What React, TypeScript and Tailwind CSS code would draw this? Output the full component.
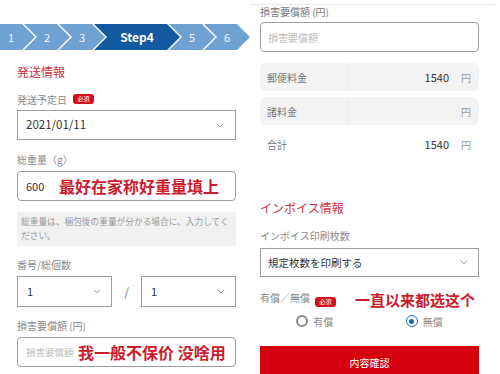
import React from "react";

const Chevron = () => (
  <svg width="8" height="5" viewBox="0 0 8 5" className="shrink-0">
    <polyline points="0.8,0.8 4,3.8 7.2,0.8" fill="none" stroke="#9a9a9a" strokeWidth="1" />
  </svg>
);

const Badge = () => (
  <span className="inline-flex items-center justify-center w-[21px] h-[10px] rounded-[3px] bg-[#d3101c] text-white text-[6px] leading-none">
    必須
  </span>
);

const Label = ({ children }: { children: React.ReactNode }) => (
  <div className="h-[16px] leading-[16px] text-[10px] text-[#8a8a8a]">{children}</div>
);

const Anno = ({ children, className = "" }: { children: React.ReactNode; className?: string }) => (
  <span
    className={`font-bold text-[#cc1b2e] whitespace-nowrap ${className}`}
    style={{ fontFamily: '"Noto Sans CJK SC", sans-serif' }}
  >
    {children}
  </span>
);

function StepBar() {
  return (
    <div className="flex h-[26px]">
      <div className="w-[35px] h-full bg-[#6ea2d3] [clip-path:polygon(0_0,calc(100%_-_13px)_0,100%_50%,calc(100%_-_13px)_100%,0_100%)] flex items-center pr-[13px]">
        <span className="flex-1 text-center text-white/90 text-[11px]">1</span>
      </div>
      <div className="w-[46px] ml-[-11px] h-full bg-[#6ea2d3] [clip-path:polygon(0_0,calc(100%_-_13px)_0,100%_50%,calc(100%_-_13px)_100%,0_100%,13px_50%)] flex items-center px-[13px]">
        <span className="flex-1 text-center text-white/90 text-[11px]">2</span>
      </div>
      <div className="w-[46px] ml-[-11px] h-full bg-[#6ea2d3] [clip-path:polygon(0_0,calc(100%_-_13px)_0,100%_50%,calc(100%_-_13px)_100%,0_100%,13px_50%)] flex items-center px-[13px]">
        <span className="flex-1 text-center text-white/90 text-[11px]">3</span>
      </div>
      <div className="w-[86px] ml-[-11px] h-full bg-[#12599f] [clip-path:polygon(0_0,calc(100%_-_13px)_0,100%_50%,calc(100%_-_13px)_100%,0_100%,13px_50%)] flex items-center px-[13px]">
        <span className="flex-1 text-center text-white text-[12px] font-semibold">Step4</span>
      </div>
      <div className="w-[46px] ml-[-11px] h-full bg-[#6ea2d3] [clip-path:polygon(0_0,calc(100%_-_13px)_0,100%_50%,calc(100%_-_13px)_100%,0_100%,13px_50%)] flex items-center px-[13px]">
        <span className="flex-1 text-center text-white/90 text-[11px]">5</span>
      </div>
      <div className="w-[46px] ml-[-11px] h-full bg-[#6ea2d3] [clip-path:polygon(0_0,calc(100%_-_13px)_0,100%_50%,calc(100%_-_13px)_100%,0_100%,13px_50%)] flex items-center px-[13px]">
        <span className="flex-1 text-center text-white/90 text-[11px]">6</span>
      </div>
    </div>
  );
}

export default function App() {
  return (
    <div
      className="w-[500px] h-[374px] overflow-hidden bg-white flex text-[#333]"
      style={{ fontFamily: '"Noto Sans CJK JP", "Noto Sans", sans-serif' }}
    >
      {/* Left screen */}
      <div className="w-[250px] shrink-0 flex flex-col">
        <div className="h-[24px] shrink-0" />
        <StepBar />
        <div className="pl-[17px] pr-[14px] flex flex-col">
          <div className="mt-[13px] h-[18px] leading-[18px] text-[12px] text-[#d0303c]">発送情報</div>

          <div className="mt-[10px] flex items-center gap-[6px] h-[16px]">
            <span className="text-[10px] text-[#8a8a8a]">発送予定日</span>
            <Badge />
          </div>
          <div className="mt-[3px] h-[30px] border border-[#9d9d9d] flex items-center pl-[8px] pr-[11px]">
            <span className="flex-1 text-[11.5px] text-[#333]">2021/01/11</span>
            <Chevron />
          </div>

          <div className="mt-[12px]">
            <Label>総重量（g）</Label>
          </div>
          <div className="mt-[3px] h-[30px] border border-[#9d9d9d] rounded-[4px] flex items-center pl-[8px]">
            <span className="text-[11px] text-[#333] w-[33px]">600</span>
            <Anno className="text-[16px] leading-[20px]">最好在家称好重量填上</Anno>
          </div>

          <div className="mt-[11px] h-[34px] bg-[#f1f1f1] px-[4px] pt-[3px] text-[8.7px] leading-[14px] text-[#9a9a9a]">
            総重量は、梱包後の重量が分かる場合に、入力してください。
          </div>

          <div className="mt-[11px]">
            <Label>番号/総個数</Label>
          </div>
          <div className="mt-[3px] flex items-center">
            <div className="w-[95px] h-[31px] border border-[#9d9d9d] flex items-center pl-[9px] pr-[10px]">
              <span className="flex-1 text-[11px]">1</span>
              <Chevron />
            </div>
            <span className="flex-1 text-center text-[12px] text-[#777]">/</span>
            <div className="w-[95px] h-[31px] border border-[#9d9d9d] flex items-center pl-[9px] pr-[10px]">
              <span className="flex-1 text-[11px]">1</span>
              <Chevron />
            </div>
          </div>

          <div className="mt-[11px]">
            <Label>損害要償額 (円)</Label>
          </div>
          <div className="mt-[3px] h-[30px] border border-[#9d9d9d] rounded-[4px] flex items-center pl-[8px]">
            <span className="text-[9.5px] text-[#bdbdbd] w-[52px]">損害要償額</span>
            <Anno className="text-[16px] leading-[20px]">我一般不保价 没啥用</Anno>
          </div>
        </div>
      </div>

      {/* Right screen */}
      <div className="w-[250px] shrink-0 flex flex-col">
        <div className="h-[5px] mr-[5px] border-b border-[#e8e8e8] shrink-0" />
        <div className="pl-[10px] pr-[21px] flex flex-col">
          <div className="h-[14px] leading-[14px] text-[10px] text-[#7a7a7a]">損害要償額 (円)</div>
          <div className="mt-[3px] h-[30px] border border-[#9d9d9d] rounded-[4px] flex items-center pl-[7px]">
            <span className="text-[10px] text-[#bdbdbd]">損害要償額</span>
          </div>

          <div className="mt-[11px] h-[28px] bg-[#f3f3f3] rounded-[6px] flex items-center">
            <span className="w-[88px] pl-[7px] text-[10px] text-[#777] border-r border-[#e9e9e9] h-full flex items-center">郵便料金</span>
            <span className="flex-1 text-right text-[11px] text-[#333]">1540</span>
            <span className="w-[30px] text-right pr-[8px] text-[10px] text-[#999]">円</span>
          </div>
          <div className="mt-[6px] h-[28px] bg-[#f3f3f3] rounded-[6px] flex items-center">
            <span className="w-[88px] pl-[7px] text-[10px] text-[#777] border-r border-[#e9e9e9] h-full flex items-center">諸料金</span>
            <span className="flex-1" />
            <span className="w-[30px] text-right pr-[8px] text-[10px] text-[#999]">円</span>
          </div>
          <div className="mt-[5px] h-[28px] flex items-center">
            <span className="w-[88px] pl-[7px] text-[10px] text-[#777]">合計</span>
            <span className="flex-1 text-right text-[11px] text-[#333]">1540</span>
            <span className="w-[30px] text-right pr-[8px] text-[10px] text-[#999]">円</span>
          </div>

          <div className="mt-[41px] h-[18px] leading-[18px] text-[12px] text-[#d0303c]">インボイス情報</div>
          <div className="mt-[11px]">
            <Label>インボイス印刷枚数</Label>
          </div>
          <div className="mt-[4px] h-[29px] border border-[#9d9d9d] flex items-center pl-[7px] pr-[10px]">
            <span className="flex-1 text-[10.5px] text-[#333]">規定枚数を印刷する</span>
            <Chevron />
          </div>

          <div className="mt-[9px] h-[22px] flex items-center">
            <span className="text-[10px] text-[#8a8a8a]">有償／無償</span>
            <span className="ml-[5px]"><Badge /></span>
            <Anno className="ml-[19px] mt-[5px] text-[15px] leading-[20px]">一直以来都选这个</Anno>
          </div>

          <div className="mt-[5px] h-[16px] flex">
            <div className="flex-1 flex items-center justify-center gap-[5px]">
              <span className="w-[12px] h-[12px] rounded-full border-2 border-[#8a8a8a]" />
              <span className="text-[10px] text-[#8a8a8a]">有償</span>
            </div>
            <div className="flex-1 flex items-center justify-center gap-[5px]">
              <span className="w-[12px] h-[12px] rounded-full border-[1.5px] border-[#1a66c2] flex items-center justify-center">
                <span className="w-[5px] h-[5px] rounded-full bg-[#1a66c2]" />
              </span>
              <span className="text-[10px] text-[#8a8a8a]">無償</span>
            </div>
          </div>

          <div className="mt-[17px] h-[32px] bg-[#d6000f] flex items-center justify-center text-white text-[10px] shrink-0">
            内容確認
          </div>
        </div>
      </div>
    </div>
  );
}
